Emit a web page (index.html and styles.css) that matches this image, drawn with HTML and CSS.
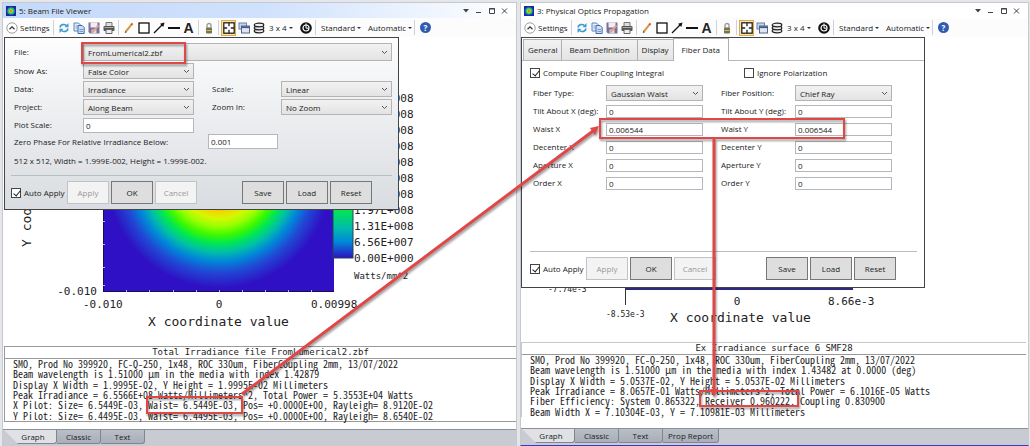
FILE: index.html
```html
<!DOCTYPE html>
<html lang="en">
<head>
  <meta charset="UTF-8">
  <title>Beam File Viewer</title>
  <link rel="stylesheet" href="styles.css">
</head>
<body>

<!-- shared icons -->
<svg class="defs" aria-hidden="true">
  <defs>
    <symbol id="i-app" viewBox="0 0 12 12"><rect width="12" height="12" fill="#1b2a9c"/><circle cx="6" cy="6" r="4.6" fill="#1c8be0"/><circle cx="6" cy="6" r="3.6" fill="#2fd04a"/><circle cx="6" cy="6" r="2.2" fill="#e8e020"/><circle cx="6" cy="6" r="1" fill="#d02010"/></symbol>
    <symbol id="i-up" viewBox="0 0 12 12"><circle cx="6" cy="6" r="5.2" fill="#fff" stroke="#888" stroke-width=".8"/><path d="M3.5 7.2 6 4.8l2.500 2.400" fill="none" stroke="#333" stroke-width="1.200"/></symbol>
    <symbol id="i-refresh" viewBox="0 0 12 12"><path d="M2 5.500C2.500 2.500 6 1.500 8.500 3.500M10 6.500C9.500 9.500 6 10.500 3.500 8.500" fill="none" stroke="#3a9ad0" stroke-width="1.600"/><path d="M10.500 1v4.200H6.500zM1.500 11V6.800h4z" fill="#3a9ad0"/></symbol>
    <symbol id="i-copy" viewBox="0 0 12 12"><path d="M1 1h4.500L7.500 3v6H1z" fill="#e4eefa" stroke="#5f86bd"/><path d="M5 3.500h4.200l2 2v6H5z" fill="#cfe0f6" stroke="#3e6cb0"/><path d="M6.500 7.500h3.500M6.500 9.500h3.500M2.500 4h2M2.500 6h2" stroke="#5f86bd" stroke-width=".8"/></symbol>
    <symbol id="i-save" viewBox="0 0 12 12"><path d="M.5.500h11v11H2l-1.500-1.500z" fill="#77709c"/><path d="M2.500.500h7v5h-7z" fill="#f4ecf4"/><path d="M3.500 7.500h5v4h-5z" fill="#ddd"/><path d="M10.500 3.500 4 10.500" stroke="#e0a08a" stroke-width="2"/></symbol>
    <symbol id="i-print" viewBox="0 0 12 12"><path d="M3 .5h6v4H3z" fill="#ddd" stroke="#777"/><rect x=".5" y="4" width="11" height="5" rx="1" fill="#555"/><path d="M3 7.500h6v4H3z" fill="#eee" stroke="#666"/><path d="M1.500 5.500h9" stroke="#aaa"/></symbol>
    <symbol id="i-pencil" viewBox="0 0 12 12"><path d="M2.500 10 8.800 2.200" stroke="#d9964a" stroke-width="2"/><path d="M8.300 2.800 9.500 1.400" stroke="#b9622e" stroke-width="2"/><path d="M1.800 11l.3-2 1.500 1.200z" fill="#444"/></symbol>
    <symbol id="i-rect" viewBox="0 0 12 12"><rect x="1" y="1" width="10" height="10" fill="#fff" stroke="#111" stroke-width="1.300"/></symbol>
    <symbol id="i-arrow" viewBox="0 0 12 12"><path d="M1 11 9 3" stroke="#111" stroke-width="1.300"/><path d="M11.500.500 10.300 5 7 1.700z" fill="#111"/></symbol>
    <symbol id="i-line" viewBox="0 0 12 12"><path d="M0 6h12" stroke="#111" stroke-width="2"/></symbol>
    <symbol id="i-lock" viewBox="0 0 12 12"><path d="M4 6V3.500a2 2 0 0 1 4 0V6" fill="none" stroke="#999" stroke-width="1.300"/><rect x="3" y="5.500" width="6" height="6" rx="1" fill="#77744c"/><path d="M3.500 8.500h5" stroke="#c4bd7c"/></symbol>
    <symbol id="i-fit" viewBox="0 0 12 12"><rect x=".8" y=".8" width="10.400" height="10.400" fill="#fff" stroke="#222" stroke-width="1.300"/><path d="M6 1v3.200M6 11V7.800M1 6h3.200M11 6H7.800" stroke="#222" stroke-width="1.300"/></symbol>
    <symbol id="i-windows" viewBox="0 0 12 12"><rect x="1" y="1" width="7.500" height="6" fill="#c8d4ea" stroke="#6880a8"/><rect x="3.500" y="4" width="8" height="7" fill="#dfe6f2" stroke="#53668c"/><path d="M3.500 5.200h8" stroke="#3f5890" stroke-width="1.800"/></symbol>
    <symbol id="i-layers" viewBox="0 0 12 12"><g fill="#eee" stroke="#222" stroke-width="1.200"><ellipse cx="6" cy="9" rx="4.800" ry="1.800"/><ellipse cx="6" cy="6" rx="4.800" ry="1.800"/><ellipse cx="6" cy="3" rx="4.800" ry="1.800"/></g></symbol>
    <symbol id="i-clock" viewBox="0 0 12 12"><circle cx="6" cy="6" r="5.800" fill="#111"/><circle cx="6" cy="6" r="3" fill="none" stroke="#fff" stroke-width="1.200"/><path d="M6 1.500V6.200h2" stroke="#fff" stroke-width="1" fill="none"/></symbol>
  </defs>
</svg>

<main class="desktop">

  <section class="window window-left">
    <header class="titlebar titlebar-active">
      <svg class="app-icon"><use href="#i-app"/></svg>
      <span class="title">5: Beam File Viewer</span>
      <svg class="controls" viewBox="0 0 46 10" fill="none" stroke="#444"><path d="M1 3h6L4 6.500z" fill="#444" stroke="none"/><path d="M14 6.500h5"/><path d="M27.500 2.500h5v5h-5zM27 3h6"/><path d="m40 2.500 5 5m0-5-5 5"/></svg>
    </header>
    <nav class="toolbar">
      <button class="settings"><svg class="icon"><use href="#i-up"/></svg>Settings</button>
      <i class="sep"></i>
      <button class="tool" aria-label="Refresh"><svg class="icon"><use href="#i-refresh"/></svg></button>
      <button class="tool" aria-label="Copy"><svg class="icon"><use href="#i-copy"/></svg></button>
      <button class="tool" aria-label="Save"><svg class="icon"><use href="#i-save"/></svg></button>
      <button class="tool" aria-label="Print"><svg class="icon"><use href="#i-print"/></svg></button>
      <i class="sep"></i>
      <button class="tool" aria-label="Pencil"><svg class="icon"><use href="#i-pencil"/></svg></button>
      <button class="tool" aria-label="Rectangle"><svg class="icon"><use href="#i-rect"/></svg></button>
      <button class="tool" aria-label="Arrow"><svg class="icon"><use href="#i-arrow"/></svg></button>
      <button class="tool" aria-label="Line"><svg class="icon"><use href="#i-line"/></svg></button>
      <button class="tool tool-text">A</button>
      <i class="sep"></i>
      <button class="tool" aria-label="Lock"><svg class="icon"><use href="#i-lock"/></svg></button>
      <i class="sep"></i>
      <button class="tool tool-on" aria-label="Fit"><svg class="icon"><use href="#i-fit"/></svg></button>
      <button class="tool" aria-label="Windows"><svg class="icon"><use href="#i-windows"/></svg></button>
      <button class="tool" aria-label="Layers"><svg class="icon"><use href="#i-layers"/></svg></button>
      <button class="drop drop-grid">3 x 4</button>
      <button class="tool" aria-label="Reset clock"><svg class="icon"><use href="#i-clock"/></svg></button>
      <i class="sep"></i>
      <button class="drop">Standard</button>
      <button class="drop">Automatic</button>
      <i class="sep"></i>
      <button class="help">?</button>
    </nav>

    <div class="canvas">
      <svg class="plot" width="512" height="305" role="img" aria-label="Irradiance plot">
        <defs>
          <radialGradient id="beam" gradientUnits="userSpaceOnUse" cx="216" cy="139" r="112">
            <stop offset="0" stop-color="#ff0000"/>
            <stop offset=".24" stop-color="#ff8c00"/>
            <stop offset=".32" stop-color="#f0d800"/>
            <stop offset=".38" stop-color="#d4f800"/>
            <stop offset=".45" stop-color="#98ff00"/>
            <stop offset=".53" stop-color="#3cf800"/>
            <stop offset=".6" stop-color="#00e850"/>
            <stop offset=".68" stop-color="#00bfa8"/>
            <stop offset=".76" stop-color="#0088d8"/>
            <stop offset=".86" stop-color="#2048d4"/>
            <stop offset="1" stop-color="#2f10c4"/>
          </radialGradient>
          <linearGradient id="bar" x1="0" y1="0" x2="0" y2="1">
            <stop offset="0" stop-color="#ff0000"/>
            <stop offset=".3" stop-color="#ffff00"/>
            <stop offset=".6" stop-color="#30f000"/>
            <stop offset=".72" stop-color="#00e060"/>
            <stop offset=".82" stop-color="#00b8b0"/>
            <stop offset=".9" stop-color="#0088d8"/>
            <stop offset="1" stop-color="#2f10c4"/>
          </linearGradient>
        </defs>
        <rect x="100" y="24" width="231" height="231" fill="url(#beam)"/>
        <path d="M100.500 24v231M100 254.500h231" fill="none" stroke="#1a0c50"/>
        <path d="M123.500 255v-2M146.500 255v-2M170.500 255v-2M193.500 255v-2M216.500 255v-2M239.500 255v-2M262.500 255v-2M285.500 255v-2M308.500 255v-2M100 184.500h2M100 207.500h2M100 230.500h2M100 248.500h2" stroke="#b8b0e8"/>
        <rect x="330" y="60" width="20" height="161" fill="url(#bar)" stroke="#245"/>
        <g class="scale-text">
          <text x="351" y="65">6.56E+008</text>
          <text x="351" y="81">5.90E+008</text>
          <text x="351" y="97">5.25E+008</text>
          <text x="351" y="113">4.59E+008</text>
          <text x="351" y="129">3.93E+008</text>
          <text x="351" y="145">3.28E+008</text>
          <text x="351" y="161">2.62E+008</text>
          <text x="351" y="177">1.97E+008</text>
          <text x="351" y="193">1.31E+008</text>
          <text x="351" y="209">6.56E+007</text>
          <text x="351" y="225">0.00E+000</text>
          <text x="94" y="258" text-anchor="end">-0.010</text>
          <text x="80" y="271">-0.010</text>
          <text x="216" y="271" text-anchor="middle">0</text>
          <text x="308" y="271">0.00998</text>
        </g>
        <text class="unit-text" x="351" y="242">Watts/mm^2</text>
        <text class="axis-text" x="145" y="289">X coordinate value</text>
        <text class="axis-text" transform="translate(28 210) rotate(-90)">Y coordinate value</text>
      </svg>
    </div>

    <div class="report">
      <h2>Total Irradiance file FromLumerical2.zbf</h2>
      <div class="report-lines">
        <p>SMO, Prod No 399920, FC-Q-250, 1x48, ROC 330um, FiberCoupling 2mm, 13/07/2022</p>
        <p>Beam wavelength is 1.51000 µm in the media with index 1.42879</p>
        <p>Display X Width = 1.9995E-02, Y Height = 1.9995E-02 Millimeters</p>
        <p>Peak Irradiance = 6.5566E+08 Watts/Millimeters^2, Total Power = 5.3553E+04 Watts</p>
        <p>X Pilot: Size= 6.5449E-03, Waist= 6.5449E-03, Pos= +0.0000E+00, Rayleigh= 8.9120E-02</p>
        <p>Y Pilot: Size= 6.4495E-03, Waist= 6.4495E-03, Pos= +0.0000E+00, Rayleigh= 8.6540E-02</p>
      </div>
    </div>

    <footer class="views">
      <button class="view view-on">Graph</button>
      <button class="view">Classic</button>
      <button class="view">Text</button>
    </footer>

    <form class="dialog dialog-file">
      <div class="file-grid">
        <label for="file">File:</label>
        <select id="file" class="wide"><option>FromLumerical2.zbf</option></select>
        <label for="show">Show As:</label>
        <select id="show"><option>False Color</option></select>
        <label for="data" class="col-1">Data:</label>
        <select id="data"><option>Irradiance</option></select>
        <label for="scale" class="col-4">Scale:</label>
        <select id="scale"><option>Linear</option></select>
        <label for="project" class="col-1">Project:</label>
        <select id="project"><option>Along Beam</option></select>
        <label for="zoom" class="col-4">Zoom In:</label>
        <select id="zoom"><option>No Zoom</option></select>
        <label for="pscale" class="col-1">Plot Scale:</label>
        <input type="text" id="pscale" value="0">
      </div>
      <div class="phase">
        <label for="phase">Zero Phase For Relative Irradiance Below:</label>
        <input type="text" id="phase" value="0.001">
      </div>
      <p class="size">512 x 512, Width = 1.999E-002, Height = 1.999E-002.</p>
      <div class="actions">
        <label class="check auto"><input type="checkbox" checked>Auto Apply</label>
        <button type="button" disabled>Apply</button>
        <button type="button">OK</button>
        <button type="button" disabled>Cancel</button>
        <button type="button" class="gap-left">Save</button>
        <button type="button">Load</button>
        <button type="button">Reset</button>
      </div>
    </form>
  </section>

  <section class="window window-right">
    <header class="titlebar">
      <svg class="app-icon"><use href="#i-app"/></svg>
      <span class="title">3: Physical Optics Propagation</span>
      <svg class="controls" viewBox="0 0 46 10" fill="none" stroke="#444"><path d="M1 3h6L4 6.500z" fill="#444" stroke="none"/><path d="M14 6.500h5"/><path d="M27.500 2.500h5v5h-5zM27 3h6"/><path d="m40 2.500 5 5m0-5-5 5"/></svg>
    </header>
    <nav class="toolbar">
      <button class="settings"><svg class="icon"><use href="#i-up"/></svg>Settings</button>
      <i class="sep"></i>
      <button class="tool" aria-label="Refresh"><svg class="icon"><use href="#i-refresh"/></svg></button>
      <button class="tool" aria-label="Copy"><svg class="icon"><use href="#i-copy"/></svg></button>
      <button class="tool" aria-label="Save"><svg class="icon"><use href="#i-save"/></svg></button>
      <button class="tool" aria-label="Print"><svg class="icon"><use href="#i-print"/></svg></button>
      <i class="sep"></i>
      <button class="tool" aria-label="Pencil"><svg class="icon"><use href="#i-pencil"/></svg></button>
      <button class="tool" aria-label="Rectangle"><svg class="icon"><use href="#i-rect"/></svg></button>
      <button class="tool" aria-label="Arrow"><svg class="icon"><use href="#i-arrow"/></svg></button>
      <button class="tool" aria-label="Line"><svg class="icon"><use href="#i-line"/></svg></button>
      <button class="tool tool-text">A</button>
      <i class="sep"></i>
      <button class="tool" aria-label="Lock"><svg class="icon"><use href="#i-lock"/></svg></button>
      <i class="sep"></i>
      <button class="tool tool-on" aria-label="Fit"><svg class="icon"><use href="#i-fit"/></svg></button>
      <button class="tool" aria-label="Windows"><svg class="icon"><use href="#i-windows"/></svg></button>
      <button class="tool" aria-label="Layers"><svg class="icon"><use href="#i-layers"/></svg></button>
      <button class="drop drop-grid">3 x 4</button>
      <button class="tool" aria-label="Reset clock"><svg class="icon"><use href="#i-clock"/></svg></button>
      <i class="sep"></i>
      <button class="drop">Standard</button>
      <button class="drop">Automatic</button>
      <i class="sep"></i>
      <button class="help">?</button>
    </nav>

    <div class="canvas">
      <svg class="plot" width="500" height="300" role="img" aria-label="Irradiance plot">
        <rect x="104" y="20" width="228" height="233" fill="#2f2a80"/>
        <path d="M104.500 250v18" stroke="#333"/>
        <text class="small-text" x="27" y="255">-7.74e-3</text>
        <text class="small-text" x="85" y="280">-8.53e-3</text>
        <g class="scale-text">
          <text x="216" y="268" text-anchor="middle">0</text>
          <text x="307" y="268">8.66e-3</text>
        </g>
        <text class="axis-text" x="149" y="285">X coordinate value</text>
      </svg>
    </div>

    <div class="report">
      <h2>Ex Irradiance surface 6 SMF28</h2>
      <div class="report-lines">
        <p>SMO, Prod No 399920, FC-Q-250, 1x48, ROC 330um, FiberCoupling 2mm, 13/07/2022</p>
        <p>Beam wavelength is 1.51000 µm in the media with index 1.43482 at 0.0000 (deg)</p>
        <p>Display X Width = 5.0537E-02, Y Height = 5.0537E-02 Millimeters</p>
        <p>Peak Irradiance = 8.0657E-01 Watts/Millimeters^2, Total Power = 6.1016E-05 Watts</p>
        <p>Fiber Efficiency: System 0.865322, Receiver 0.960222, Coupling 0.830900</p>
        <p>Beam Width X = 7.10304E-03, Y = 7.10981E-03 Millimeters</p>
      </div>
    </div>

    <footer class="views">
      <button class="view view-on">Graph</button>
      <button class="view">Classic</button>
      <button class="view">Text</button>
      <button class="view">Prop Report</button>
    </footer>

    <form class="dialog dialog-fiber">
      <div class="tabs">
        <button type="button">General</button>
        <button type="button">Beam Definition</button>
        <button type="button">Display</button>
        <button type="button" class="tab-on">Fiber Data</button>
      </div>
      <div class="fiber-body">
        <div class="checks">
          <label class="check"><input type="checkbox" checked>Compute Fiber Coupling Integral</label>
          <label class="check"><input type="checkbox">Ignore Polarization</label>
        </div>
        <div class="fiber-grid">
          <label for="ftype">Fiber Type:</label>
          <select id="ftype"><option>Gaussian Waist</option></select>
          <label for="fpos" class="col-4">Fiber Position:</label>
          <select id="fpos"><option>Chief Ray</option></select>
          <label for="tx">Tilt About X (deg):</label>
          <input type="text" id="tx" value="0">
          <label for="ty" class="col-4">Tilt About Y (deg):</label>
          <input type="text" id="ty" value="0">
          <label for="wx">Waist X</label>
          <input type="text" id="wx" value="0.006544">
          <label for="wy" class="col-4">Waist Y</label>
          <input type="text" id="wy" value="0.006544">
          <label for="dx">Decenter X</label>
          <input type="text" id="dx" value="0">
          <label for="dy" class="col-4">Decenter Y</label>
          <input type="text" id="dy" value="0">
          <label for="ax">Aperture X</label>
          <input type="text" id="ax" value="0">
          <label for="ay" class="col-4">Aperture Y</label>
          <input type="text" id="ay" value="0">
          <label for="ox">Order X</label>
          <input type="text" id="ox" value="0">
          <label for="oy" class="col-4">Order Y</label>
          <input type="text" id="oy" value="0">
        </div>
      </div>
      <div class="actions">
        <label class="check auto"><input type="checkbox" checked>Auto Apply</label>
        <button type="button" disabled>Apply</button>
        <button type="button">OK</button>
        <button type="button" disabled>Cancel</button>
        <button type="button" class="gap-left">Save</button>
        <button type="button">Load</button>
        <button type="button">Reset</button>
      </div>
    </form>
  </section>
</main>

<!-- red callouts drawn over both windows -->
<svg class="callouts" aria-hidden="true">
  <g fill="none" stroke="#e04848" stroke-width="2">
    <rect x="82" y="43" width="103" height="20"/>
    <rect x="600" y="119" width="244" height="19"/>
    <rect x="147" y="397" width="95" height="16"/>
    <rect x="700" y="391" width="98" height="15"/>
    <path d="M242 394 593 131" stroke-width="3"/>
    <path d="M714 139V390" stroke-width="3"/>
  </g>
  <path d="M599 126l-4 9-5-7zM714 397l-4-8h8z" fill="#e04848"/>
</svg>

</body>
</html>
```
FILE: styles.css
```css
* {
  box-sizing: border-box;
}

body {
  margin: 0;
  font-family: "Open Sans", "Noto Sans", sans-serif;
  font-size: 8px;
  line-height: 12px;
  color: #222;
  background: #e4e6ea;
}

button, input, select {
  font: inherit;
  color: inherit;
  margin: 0;
}

p, h2 {
  margin: 0;
}

.defs {
  position: absolute;
  width: 0;
  height: 0;
}

.desktop {
  display: grid;
  grid-template-columns: 515fr 509fr;
  gap: 3px;
  min-height: 100vh;
  padding: 2px 1px 0 2px;
}

.window {
  position: relative;
  display: flex;
  flex-direction: column;
  min-width: 0;
  background: #fff;
  border: 1px solid #c6c9ce;
  border-bottom: none;
}

.window-right {
  border-bottom: 1px solid #3a38c8;
}

/* title bar */
.titlebar {
  display: flex;
  align-items: center;
  height: 15px;
  padding: 0 8px 0 3px;
}

.titlebar-active {
  background: linear-gradient(to right, #c4dafa, #cfe1fc 50%, #fff);
}

.app-icon {
  width: 10px;
  height: 10px;
}

.title {
  flex: 1;
  padding-left: 3px;
}

.controls {
  width: 46px;
  height: 10px;
}

/* toolbar */
.toolbar {
  display: flex;
  align-items: center;
  height: 19px;
  padding-left: 3px;
  background: #fcfcfd;
}

.toolbar button {
  padding: 0;
  border: none;
  background: none;
}

.icon {
  display: block;
  width: 12px;
  height: 12px;
}

.toolbar .settings {
  display: flex;
  align-items: center;
  gap: 2px;
  width: 45px;
  white-space: nowrap;
}

.sep {
  width: 1px;
  height: 15px;
  margin: 0 2px;
  background: #cdd3dc;
}

.toolbar .tool {
  display: flex;
  align-items: center;
  justify-content: center;
  width: 15px;
  height: 16px;
}

.toolbar .tool-text {
  font: bold 14px "Liberation Sans", sans-serif;
}

.toolbar .tool-on {
  background: #fbe3a4;
  border: 1px solid #d8ab50;
}

.toolbar .drop {
  width: 47px;
  text-align: left;
  padding-left: 3px;
  white-space: nowrap;
}

.toolbar .drop-grid {
  width: 32px;
}

.drop::after {
  content: "";
  display: inline-block;
  margin-left: 2px;
  vertical-align: 2px;
  border: 2px solid transparent;
  border-top: 2px solid #333;
  border-bottom: none;
}

.toolbar .help {
  width: 11px;
  height: 11px;
  margin-left: 3px;
  border-radius: 50%;
  background: #2f5cb0;
  color: #fff;
  font-weight: bold;
  line-height: 11px;
}

/* plot area */
.canvas {
  flex: 1;
  min-height: 0;
  overflow: hidden;
}

.plot {
  display: block;
}

.scale-text, .axis-text, .unit-text, .small-text {
  font-family: "DejaVu Sans Mono", monospace;
  font-size: 11px;
  fill: #222;
}

.axis-text {
  font-size: 13px;
}

.unit-text {
  font-size: 9px;
}

.small-text {
  font-size: 8px;
}

/* text report under the plot */
.report {
  margin: 0 0 7px 1px;
  border: 1px solid #999;
  border-right: none;
  font-family: "Noto Sans Mono CJK SC", "DejaVu Sans Mono", monospace;
  font-size: 10px;
}

.report h2 {
  height: 12px;
  border-bottom: 1px solid #999;
  font: 9px/11px "DejaVu Sans Mono", monospace;
  text-align: center;
}

.report-lines {
  display: grid;
  grid-auto-rows: 1fr;
  height: 62px;
  padding-left: 8px;
  line-height: 10px;
  white-space: pre;
}

.window-right .report {
  border-color: #c8c8c8;
  border-bottom: none;
  margin: 0 2px 11px 0;
}

/* view tabs */
.views {
  display: flex;
  height: 17px;
  padding: 0 0 2px 1px;
  background: #c8cbd1;
  border-top: 1px solid #8c9098;
}

.view {
  min-width: 44px;
  padding: 0 5px;
  border: 1px solid #80858e;
  border-top: none;
  border-left: none;
  border-radius: 0 0 3px 0;
  background: linear-gradient(#b9bec7, #a9afba);
  line-height: 12px;
}

.view-on {
  width: 53px;
  padding: 0 4px 0 10px;
  background: #dfe1e5;
  clip-path: polygon(0 0, 100% 0, 100% 100%, 14px 100%);
}

/* settings dialogs */
.dialog {
  position: absolute;
  top: 34px;
  left: 1px;
  border: 1px solid #444;
  background: #fff;
}

.dialog-file {
  width: 395px;
  padding: 5px 6px;
  background: linear-gradient(#fdfdfe, #d9dce0);
}

.file-grid {
  display: grid;
  grid-template-columns: 69px 111px 18px 69px 111px;
  grid-template-rows: 18px;
  grid-auto-rows: 16px;
  gap: 2px 0;
  align-items: center;
  padding-left: 3px;
}

.col-1 {
  grid-column: 1;
}

.col-4 {
  grid-column: 4;
}

.wide {
  grid-column: 2 / 6;
}

input[type="text"] {
  width: 100%;
  height: 15px;
  padding: 0 2px;
  border: 1px solid #b4b7bb;
  background: #fff;
  line-height: 12px;
}

select {
  width: 100%;
  height: 16px;
  padding: 0 4px;
  appearance: none;
  border: 1px solid #b4b4b4;
  border-radius: 0;
  line-height: 13px;
  background:
    url("data:image/svg+xml,%3Csvg xmlns='http://www.w3.org/2000/svg' width='7' height='5'%3E%3Cpath d='M1 1l2.500 2.500L6 1' fill='none' stroke='%23555'/%3E%3C/svg%3E") right 3px center no-repeat,
    linear-gradient(#f2f2f2, #e3e3e3);
}

select.wide {
  height: 18px;
}

.phase {
  display: flex;
  align-items: center;
  margin-top: 1px;
  padding-left: 3px;
}

.phase label {
  width: 194px;
  white-space: nowrap;
}

.phase input[type="text"] {
  width: 70px;
}

.size {
  margin-top: 6px;
  padding-left: 3px;
}

.check {
  display: flex;
  align-items: center;
  gap: 3px;
  white-space: nowrap;
}

.check input {
  appearance: none;
  width: 10px;
  height: 10px;
  margin: 0;
  border: 1px solid #444;
  background: #fff;
}

.check input:checked::after {
  content: "";
  display: block;
  width: 3px;
  height: 6px;
  margin-left: 3px;
  border: solid #222;
  border-width: 0 1px 1px 0;
  transform: rotate(40deg);
}

.actions {
  display: flex;
  gap: 2px;
  margin-top: 8px;
  padding-top: 5px;
  border-top: 1px solid #b4bfc4;
}

.actions .auto {
  width: 54px;
}

.actions button {
  width: 42px;
  height: 23px;
  padding: 0;
  border: 1px solid #777;
  background: #dedede;
}

.actions button:disabled {
  border-color: #c0c2c4;
  background: #f3f3f4;
  color: #999;
}

.actions .gap-left {
  margin-left: 43px;
}

.dialog-fiber {
  left: 0;
  display: flex;
  flex-direction: column;
  width: 404px;
  height: 251px;
  padding: 0 7px 7px 8px;
}

.tabs {
  display: flex;
  align-items: flex-end;
  height: 23px;
  margin: 0 -7px 0 -8px;
  padding-left: 1px;
  border-bottom: 1px solid #b8b8b8;
}

.tabs button {
  height: 21px;
  margin-right: -1px;
  padding: 0 4px;
  border: 1px solid #b0b0b0;
  border-bottom: none;
  background: linear-gradient(#f2f2f2, #e4e4e4);
}

.tabs button:nth-child(2) {
  padding: 0 7px;
}

.tabs .tab-on {
  height: 23px;
  margin-bottom: -1px;
  padding: 0 8px;
  background: #fff;
}

.fiber-body {
  flex: 1;
  padding-top: 6px;
}

.checks {
  display: grid;
  grid-template-columns: 214px auto;
}

.fiber-grid {
  display: grid;
  grid-template-columns: 73px 97px 18px 74px 97px;
  grid-auto-rows: 16px;
  gap: 2px 0;
  align-items: center;
  margin-top: 6px;
  padding-left: 3px;
  white-space: nowrap;
}

.fiber-grid input[type="text"] {
  height: 13px;
  line-height: 11px;
}

.dialog-fiber .actions .gap-left {
  margin-left: 48px;
}

/* callouts */
.callouts {
  position: absolute;
  top: 0;
  left: 0;
  width: 100%;
  height: 100%;
  pointer-events: none;
  filter: drop-shadow(1px 2px 1px rgba(0, 0, 0, 0.4));
}
```
